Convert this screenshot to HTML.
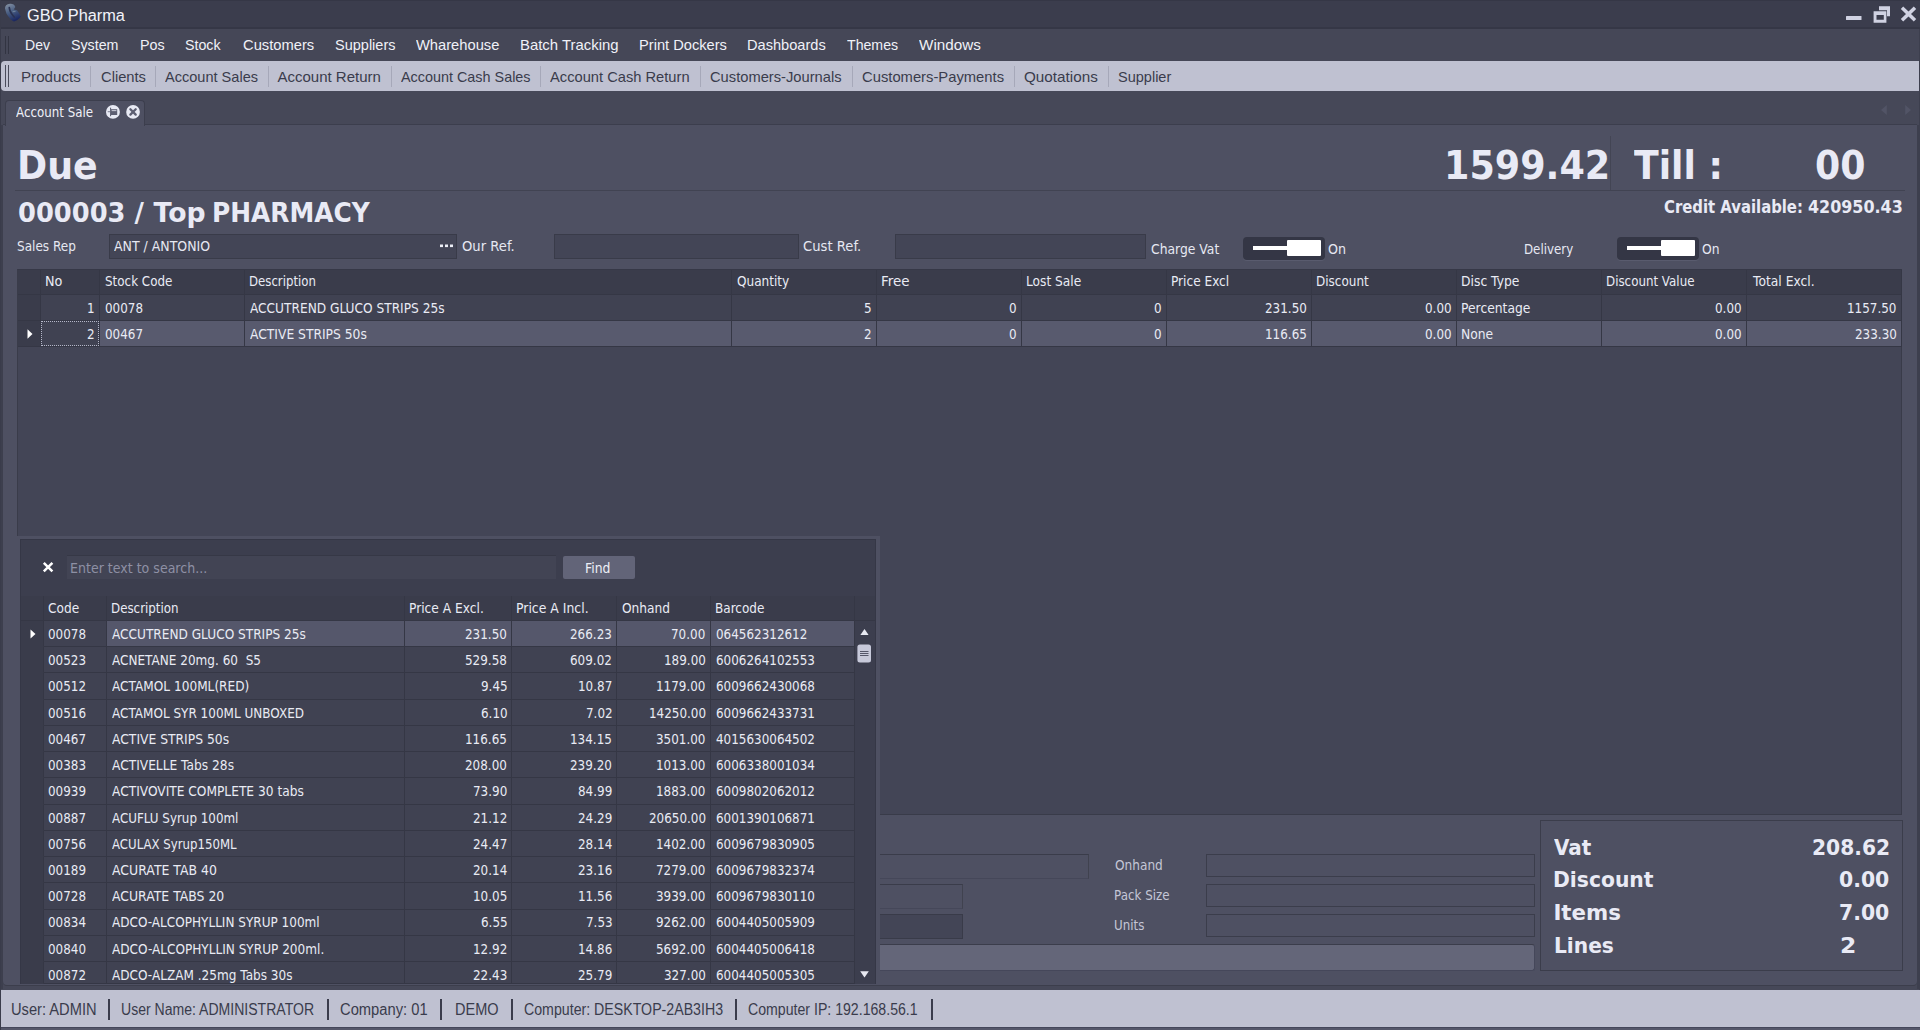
<!DOCTYPE html>
<html><head><meta charset="utf-8"><title>GBO Pharma</title>
<style>
*{box-sizing:border-box;margin:0;padding:0}
html,body{width:1920px;height:1030px;overflow:hidden;background:#464858;font-family:"DejaVu Sans",sans-serif;color:#eceef6}
div,span,i,b,u{position:absolute;white-space:pre;line-height:1}
span{transform-origin:0 0}
.s{font-family:"Liberation Sans",sans-serif}
.d{font-family:"DejaVu Sans",sans-serif}
.b{font-weight:bold;color:#e9eaf5}
#title{left:0;top:0;width:1920px;height:28px;background:#3b3d4d;border-top:1px solid #353746}
#titleline{left:0;top:27px;width:1920px;height:2px;background:#353746}
#menu{left:0;top:29px;width:1920px;height:32px;background:#454757}
#tool{left:1px;top:61px;width:1918px;height:30px;background:#bfc1d1;border-radius:4px 0 0 4px}
#tool i{top:5px;width:1px;height:21px;background:#a6a8b9}
.grip{width:4px;border-left:1px solid;border-right:1px solid}
#tab{left:5px;top:100px;width:140px;height:26px;background:#4e5062;border:1px solid #3c3e4d;border-bottom:none;border-radius:4px 4px 0 0}
#main{left:3px;top:124px;width:1914px;height:861px;background:#4e5062;border-top:1px solid #3c3e4d;border-radius:0 0 4px 4px;box-shadow:0 1px 0 #3c3e4c}
.inp{background:#434556;border:1px solid #393b49;height:25px}
.inp2{background:#4e5062;border:1px solid #3a3c4a;border-right-color:#40424f;border-bottom-color:#454759;height:25px}
.inp3{background:#4e5062;border:1px solid #3b3d4b;height:23px}
.hline{height:1px;background:#414352}
.c{height:26px;border-right:1px solid #353745;border-bottom:1px solid #353745}
.sel{background:#585a6e}
.sel2{background:#55576b}
.row{background:#404252}
.hd{background:#3a3c4b}
#status{left:1px;top:990px;width:1919px;height:37px;background:#bfc1d1}
#status i{top:9px;width:2px;height:21px;background:#3a3c4c}
#sb{left:0;top:1027px;width:1920px;height:3px;background:#55576a;border-top:1px solid #45475b}
.tog{width:82px;height:23px;background:#343645;border-radius:4px;box-shadow:0 1px 0 #595b6e}
.tog b{left:10px;top:9px;width:36px;height:4px;background:#fff}
.tog u{left:44px;top:3px;width:34px;height:16px;background:#fff;border-radius:1px}
</style></head><body>
<div id="title"></div><div id="titleline"></div>
<svg style="position:absolute;left:0;top:0" width="26" height="26" viewBox="0 0 26 26"><defs><linearGradient id="lg" x1="0.2" y1="0" x2="0.6" y2="1"><stop offset="0" stop-color="#808da0"/><stop offset="0.45" stop-color="#485d82"/><stop offset="1" stop-color="#17235f"/></linearGradient></defs><path d="M5 8.6 Q4.8 4.6 10 3.8 Q14.2 3.6 15.3 7 L13.8 9.4 L17 10.2 Q19.5 13 20.9 16.8 Q17.8 20.4 14 21.6 Q10 19.5 6.4 13.4 Z" fill="url(#lg)"/><path d="M9.3 7.7 Q9.6 11 11.4 13.4 L14.2 17" stroke="#2a3252" stroke-width="1.7" fill="none" stroke-linecap="round"/><path d="M12.6 11.6 L15.5 11.3" stroke="#6b7f99" stroke-width="1.2" fill="none"/></svg>
<span class="s" style="font-size:17.4px;color:#f2f3fa;left:26.8px;top:6.9px;transform:scaleX(0.938);">GBO Pharma</span>
<svg style="position:absolute;left:1840px;top:0" width="80" height="28" viewBox="0 0 80 28"><g fill="#d0d2e2"><rect x="6" y="16" width="15.5" height="4" rx="0.5"/><path d="M39 6.3 H50 V16.2 H47 V10.3 H39 Z"/><path d="M33.6 11.2 H46.4 V22.7 H33.6 Z M36.5 15.1 V19.8 H43.8 V15.1 Z" fill-rule="evenodd"/><path d="M63.2 6.5 L68.5 11.5 L73.8 6.5 L76.2 9 L71 14 L76.2 19 L73.8 21.5 L68.5 16.5 L63.2 21.5 L60.8 19 L66 14 L60.8 9 Z"/></g></svg>
<div id="menu"><div class="grip" style="left:5px;top:7px;height:18px;border-color:#323442"></div></div>
<span class="s" style="font-size:15px;color:#f0f1f8;left:24.9px;top:36.5px;transform:scaleX(0.936);">Dev</span>
<span class="s" style="font-size:15px;color:#f0f1f8;left:71.3px;top:36.5px;transform:scaleX(0.949);">System</span>
<span class="s" style="font-size:15px;color:#f0f1f8;left:139.5px;top:36.5px;transform:scaleX(0.953);">Pos</span>
<span class="s" style="font-size:15px;color:#f0f1f8;left:185.0px;top:36.5px;transform:scaleX(0.947);">Stock</span>
<span class="s" style="font-size:15px;color:#f0f1f8;left:243.0px;top:36.5px;transform:scaleX(0.982);">Customers</span>
<span class="s" style="font-size:15px;color:#f0f1f8;left:335.0px;top:36.5px;transform:scaleX(0.967);">Suppliers</span>
<span class="s" style="font-size:15px;color:#f0f1f8;left:416.0px;top:36.5px;transform:scaleX(0.980);">Wharehouse</span>
<span class="s" style="font-size:15px;color:#f0f1f8;left:520.0px;top:36.5px;transform:scaleX(0.993);">Batch Tracking</span>
<span class="s" style="font-size:15px;color:#f0f1f8;left:639.0px;top:36.5px;transform:scaleX(0.977);">Print Dockers</span>
<span class="s" style="font-size:15px;color:#f0f1f8;left:746.7px;top:36.5px;transform:scaleX(0.974);">Dashboards</span>
<span class="s" style="font-size:15px;color:#f0f1f8;left:846.7px;top:36.5px;transform:scaleX(0.943);">Themes</span>
<span class="s" style="font-size:15px;color:#f0f1f8;left:918.7px;top:36.5px;transform:scaleX(1.016);">Windows</span>
<div id="tool"><div class="grip" style="left:4px;top:4px;height:22px;border-color:#4a4c5c"></div>
<i style="left:89px"></i>
<i style="left:154px"></i>
<i style="left:267px"></i>
<i style="left:390px"></i>
<i style="left:539px"></i>
<i style="left:699px"></i>
<i style="left:851px"></i>
<i style="left:1013px"></i>
<i style="left:1107px"></i>
</div>
<span class="s" style="font-size:15px;color:#3a3c4c;left:20.7px;top:69.0px;transform:scaleX(1.010);">Products</span>
<span class="s" style="font-size:15px;color:#3a3c4c;left:100.5px;top:69.0px;transform:scaleX(0.981);">Clients</span>
<span class="s" style="font-size:15px;color:#3a3c4c;left:165.0px;top:69.0px;transform:scaleX(0.970);">Account Sales</span>
<span class="s" style="font-size:15px;color:#3a3c4c;left:277.5px;top:69.0px;">Account Return</span>
<span class="s" style="font-size:15px;color:#3a3c4c;left:401.0px;top:69.0px;transform:scaleX(0.959);">Account Cash Sales</span>
<span class="s" style="font-size:15px;color:#3a3c4c;left:550.0px;top:69.0px;transform:scaleX(0.979);">Account Cash Return</span>
<span class="s" style="font-size:15px;color:#3a3c4c;left:710.0px;top:69.0px;transform:scaleX(0.980);">Customers-Journals</span>
<span class="s" style="font-size:15px;color:#3a3c4c;left:861.7px;top:69.0px;transform:scaleX(0.985);">Customers-Payments</span>
<span class="s" style="font-size:15px;color:#3a3c4c;left:1024.0px;top:69.0px;transform:scaleX(1.017);">Quotations</span>
<span class="s" style="font-size:15px;color:#3a3c4c;left:1117.7px;top:69.0px;transform:scaleX(0.968);">Supplier</span>
<div style="left:0;top:125px;width:3px;height:864px;background:#3d3f4e"></div><div style="left:1917px;top:125px;width:3px;height:864px;background:#3d3f4e"></div><div id="main"></div><div id="tab"></div>
<span class="d" style="font-size:13.5px;color:#f0f1f8;left:16.2px;top:106.0px;transform:scaleX(0.878);">Account Sale</span>
<svg style="position:absolute;left:104px;top:104px" width="40" height="16" viewBox="0 0 40 16"><circle cx="8.95" cy="7.9" r="6.95" fill="#e8eaf4"/><rect x="7" y="5.2" width="6.2" height="5.8" fill="#5d5f72"/><rect x="7.6" y="6.3" width="4.8" height="0.8" fill="#e8eaf4"/><rect x="6.1" y="3.7" width="1" height="8.5" fill="#55576a"/><rect x="3.7" y="7.3" width="2.5" height="0.9" fill="#6b6d80"/><circle cx="29.05" cy="7.9" r="6.85" fill="#e8eaf4"/><path d="M26.4 5.3 L31.7 10.6 M31.7 5.3 L26.4 10.6" stroke="#5d5f72" stroke-width="2.3" stroke-linecap="round"/></svg>
<svg style="position:absolute;left:1878px;top:104px" width="36" height="12" viewBox="0 0 36 12"><path d="M8.8 1 L3 6 L8.8 11 Z M27.2 1 L33 6 L27.2 11 Z" fill="#525466"/></svg>
<span class="d b" style="font-size:39.5px;left:17.2px;top:145.6px;transform:scaleX(0.920);">Due</span>
<span class="d b" style="font-size:39.5px;left:1443.6px;top:145.6px;transform:scaleX(0.924);">1599.42</span>
<span class="d b" style="font-size:39.5px;left:1634.0px;top:145.6px;transform:scaleX(0.916);">Till :</span>
<span class="d b" style="font-size:39.5px;left:1814.9px;top:145.6px;transform:scaleX(0.918);">00</span>
<div style="left:1610px;top:136px;width:1px;height:54px;background:#434554"></div>
<div class="hline" style="left:15px;top:190px;width:1890px"></div>
<span class="d b" style="font-size:26.67px;left:17.6px;top:200.0px;transform:scaleX(0.966);">000003 /</span>
<span class="d b" style="font-size:26.67px;left:153.5px;top:200.0px;">Top</span>
<span class="d b" style="font-size:26.67px;left:211.9px;top:200.0px;transform:scaleX(0.933);">PHARMACY</span>
<span class="d b" style="font-size:17.33px;left:1664.3px;top:198.5px;transform:scaleX(0.857);">Credit Available:</span>
<span class="d b" style="font-size:17.33px;left:1808.0px;top:198.5px;transform:scaleX(0.920);">420950.43</span>
<span class="d" style="font-size:13.5px;color:#e6e8f2;left:17.0px;top:240.0px;transform:scaleX(0.894);">Sales Rep</span>
<div class="inp" style="left:109px;top:234px;width:348px"></div>
<span class="d" style="font-size:13.5px;color:#e6e8f2;left:113.5px;top:240.0px;transform:scaleX(0.927);">ANT / ANTONIO</span>
<svg style="position:absolute;left:440px;top:244px" width="14" height="4"><rect x="0" y="0.5" width="3" height="2.6" fill="#eceef6"/><rect x="5" y="0.5" width="3" height="2.6" fill="#eceef6"/><rect x="10" y="0.5" width="3" height="2.6" fill="#eceef6"/></svg>
<span class="d" style="font-size:13.5px;color:#e6e8f2;left:462.0px;top:240.0px;transform:scaleX(0.974);">Our Ref.</span>
<div class="inp" style="left:554px;top:234px;width:245px"></div>
<span class="d" style="font-size:13.5px;color:#e6e8f2;left:803.0px;top:240.0px;transform:scaleX(0.975);">Cust Ref.</span>
<div class="inp" style="left:895px;top:234px;width:251px"></div>
<span class="d" style="font-size:13.5px;color:#e6e8f2;left:1151.0px;top:242.7px;transform:scaleX(0.917);">Charge Vat</span>
<div class="tog" style="left:1243px;top:237px"><b></b><u></u></div>
<span class="d" style="font-size:13.5px;color:#e6e8f2;left:1328.0px;top:242.7px;transform:scaleX(0.940);">On</span>
<span class="d" style="font-size:13.5px;color:#e6e8f2;left:1523.8px;top:242.7px;transform:scaleX(0.877);">Delivery</span>
<div class="tog" style="left:1617px;top:237px"><b></b><u></u></div>
<span class="d" style="font-size:13.5px;color:#e6e8f2;left:1702.0px;top:242.7px;transform:scaleX(0.913);">On</span>
<div style="left:17px;top:269px;width:1885px;height:546px;background:#434556;border:1px solid #393b49;border-top-color:#363847;border-left-color:#3a3c4a"></div>
<div class="c hd" style="left:18px;top:270px;width:23px;height:25px"></div>
<div class="c hd" style="left:41px;top:270px;width:59px;height:25px"></div>
<div class="c hd" style="left:100px;top:270px;width:145px;height:25px"></div>
<div class="c hd" style="left:245px;top:270px;width:487px;height:25px"></div>
<div class="c hd" style="left:732px;top:270px;width:145px;height:25px"></div>
<div class="c hd" style="left:877px;top:270px;width:145px;height:25px"></div>
<div class="c hd" style="left:1022px;top:270px;width:145px;height:25px"></div>
<div class="c hd" style="left:1167px;top:270px;width:145px;height:25px"></div>
<div class="c hd" style="left:1312px;top:270px;width:145px;height:25px"></div>
<div class="c hd" style="left:1457px;top:270px;width:145px;height:25px"></div>
<div class="c hd" style="left:1602px;top:270px;width:145px;height:25px"></div>
<div class="c hd" style="left:1747px;top:270px;width:155px;height:25px"></div>
<div class="c hd" style="left:18px;top:295px;width:23px"></div>
<div class="c row" style="left:41px;top:295px;width:59px"></div>
<div class="c row" style="left:100px;top:295px;width:145px"></div>
<div class="c row" style="left:245px;top:295px;width:487px"></div>
<div class="c row" style="left:732px;top:295px;width:145px"></div>
<div class="c row" style="left:877px;top:295px;width:145px"></div>
<div class="c row" style="left:1022px;top:295px;width:145px"></div>
<div class="c row" style="left:1167px;top:295px;width:145px"></div>
<div class="c row" style="left:1312px;top:295px;width:145px"></div>
<div class="c row" style="left:1457px;top:295px;width:145px"></div>
<div class="c row" style="left:1602px;top:295px;width:145px"></div>
<div class="c row" style="left:1747px;top:295px;width:155px"></div>
<div class="c hd" style="left:18px;top:321px;width:23px"></div>
<div class="c row" style="left:41px;top:321px;width:59px"></div>
<div class="c sel" style="left:100px;top:321px;width:145px"></div>
<div class="c sel" style="left:245px;top:321px;width:487px"></div>
<div class="c sel" style="left:732px;top:321px;width:145px"></div>
<div class="c sel" style="left:877px;top:321px;width:145px"></div>
<div class="c sel" style="left:1022px;top:321px;width:145px"></div>
<div class="c sel" style="left:1167px;top:321px;width:145px"></div>
<div class="c sel" style="left:1312px;top:321px;width:145px"></div>
<div class="c sel" style="left:1457px;top:321px;width:145px"></div>
<div class="c sel" style="left:1602px;top:321px;width:145px"></div>
<div class="c sel" style="left:1747px;top:321px;width:155px"></div>
<svg style="position:absolute;left:27px;top:329px" width="6" height="11"><path d="M0.5 0.3 L5.5 5 L0.5 9.7 Z" fill="#fff"/></svg>
<div style="left:41px;top:321px;width:58px;height:25px;border:1px dotted #b4b6c8"></div>
<span class="d" style="font-size:13.5px;color:#e9ebf4;left:44.9px;top:275.2px;transform:scaleX(0.947);">No</span>
<span class="d" style="font-size:13.5px;color:#e9ebf4;left:104.8px;top:275.2px;transform:scaleX(0.885);">Stock Code</span>
<span class="d" style="font-size:13.5px;color:#e9ebf4;left:248.9px;top:275.2px;transform:scaleX(0.870);">Description</span>
<span class="d" style="font-size:13.5px;color:#e9ebf4;left:736.9px;top:275.2px;transform:scaleX(0.896);">Quantity</span>
<span class="d" style="font-size:13.5px;color:#e9ebf4;left:881.1px;top:275.2px;transform:scaleX(0.995);">Free</span>
<span class="d" style="font-size:13.5px;color:#e9ebf4;left:1026.1px;top:275.2px;transform:scaleX(0.904);">Lost Sale</span>
<span class="d" style="font-size:13.5px;color:#e9ebf4;left:1171.1px;top:275.2px;transform:scaleX(0.899);">Price Excl</span>
<span class="d" style="font-size:13.5px;color:#e9ebf4;left:1316.1px;top:275.2px;transform:scaleX(0.890);">Discount</span>
<span class="d" style="font-size:13.5px;color:#e9ebf4;left:1461.1px;top:275.2px;transform:scaleX(0.915);">Disc Type</span>
<span class="d" style="font-size:13.5px;color:#e9ebf4;left:1606.1px;top:275.2px;transform:scaleX(0.879);">Discount Value</span>
<span class="d" style="font-size:13.5px;color:#e9ebf4;left:1752.5px;top:275.2px;transform:scaleX(0.913);">Total Excl.</span>
<span class="d" style="font-size:13.5px;color:#e9ebf4;left:87.3px;top:301.7px;transform:scaleX(0.886);">1</span>
<span class="d" style="font-size:13.5px;color:#e9ebf4;left:104.8px;top:301.7px;transform:scaleX(0.886);">00078</span>
<span class="d" style="font-size:13.5px;color:#e9ebf4;left:250.2px;top:301.7px;transform:scaleX(0.902);">ACCUTREND GLUCO STRIPS 25s</span>
<span class="d" style="font-size:13.5px;color:#e9ebf4;left:864.3px;top:301.7px;transform:scaleX(0.886);">5</span>
<span class="d" style="font-size:13.5px;color:#e9ebf4;left:1009.3px;top:301.7px;transform:scaleX(0.886);">0</span>
<span class="d" style="font-size:13.5px;color:#e9ebf4;left:1154.3px;top:301.7px;transform:scaleX(0.886);">0</span>
<span class="d" style="font-size:13.5px;color:#e9ebf4;left:1265.0px;top:301.7px;transform:scaleX(0.886);">231.50</span>
<span class="d" style="font-size:13.5px;color:#e9ebf4;left:1425.3px;top:301.7px;transform:scaleX(0.886);">0.00</span>
<span class="d" style="font-size:13.5px;color:#e9ebf4;left:1461.1px;top:301.7px;transform:scaleX(0.914);">Percentage</span>
<span class="d" style="font-size:13.5px;color:#e9ebf4;left:1715.3px;top:301.7px;transform:scaleX(0.886);">0.00</span>
<span class="d" style="font-size:13.5px;color:#e9ebf4;left:1847.4px;top:301.7px;transform:scaleX(0.886);">1157.50</span>
<span class="d" style="font-size:13.5px;color:#e9ebf4;left:87.3px;top:327.5px;transform:scaleX(0.886);">2</span>
<span class="d" style="font-size:13.5px;color:#e9ebf4;left:104.8px;top:327.5px;transform:scaleX(0.886);">00467</span>
<span class="d" style="font-size:13.5px;color:#e9ebf4;left:250.2px;top:327.5px;transform:scaleX(0.912);">ACTIVE STRIPS 50s</span>
<span class="d" style="font-size:13.5px;color:#e9ebf4;left:864.3px;top:327.5px;transform:scaleX(0.886);">2</span>
<span class="d" style="font-size:13.5px;color:#e9ebf4;left:1009.3px;top:327.5px;transform:scaleX(0.886);">0</span>
<span class="d" style="font-size:13.5px;color:#e9ebf4;left:1154.3px;top:327.5px;transform:scaleX(0.886);">0</span>
<span class="d" style="font-size:13.5px;color:#e9ebf4;left:1265.0px;top:327.5px;transform:scaleX(0.886);">116.65</span>
<span class="d" style="font-size:13.5px;color:#e9ebf4;left:1425.3px;top:327.5px;transform:scaleX(0.886);">0.00</span>
<span class="d" style="font-size:13.5px;color:#e9ebf4;left:1461.1px;top:327.5px;transform:scaleX(0.914);">None</span>
<span class="d" style="font-size:13.5px;color:#e9ebf4;left:1715.3px;top:327.5px;transform:scaleX(0.886);">0.00</span>
<span class="d" style="font-size:13.5px;color:#e9ebf4;left:1855.0px;top:327.5px;transform:scaleX(0.886);">233.30</span>
<div class="inp2" style="left:870px;top:854px;width:219px"></div>
<div class="inp2" style="left:870px;top:884px;width:93px"></div>
<div class="inp" style="left:870px;top:914px;width:93px"></div>
<div class="inp3" style="left:1206px;top:854px;width:329px"></div>
<div class="inp3" style="left:1206px;top:884px;width:329px"></div>
<div class="inp3" style="left:1206px;top:914px;width:329px"></div>
<div style="left:870px;top:944px;width:665px;height:27px;background:#646679;border:1px solid #45475a;border-top-color:#3b3d4b;border-radius:3px"></div>
<span class="d" style="font-size:13.5px;color:#c4c6d6;left:1114.6px;top:858.8px;transform:scaleX(0.900);">Onhand</span>
<span class="d" style="font-size:13.5px;color:#c4c6d6;left:1113.7px;top:888.8px;transform:scaleX(0.881);">Pack Size</span>
<span class="d" style="font-size:13.5px;color:#c4c6d6;left:1113.7px;top:918.8px;transform:scaleX(0.878);">Units</span>
<div style="left:1540px;top:820px;width:363px;height:151px;border:1px solid #3b3d4b"></div>
<span class="d b" style="font-size:21.33px;left:1554.4px;top:836.6px;transform:scaleX(0.934);">Vat</span>
<span class="d b" style="font-size:21.33px;left:1812.4px;top:836.6px;transform:scaleX(0.950);">208.62</span>
<span class="d b" style="font-size:21.33px;left:1553.4px;top:869.0px;transform:scaleX(0.952);">Discount</span>
<span class="d b" style="font-size:21.33px;left:1839.2px;top:869.0px;transform:scaleX(0.956);">0.00</span>
<span class="d b" style="font-size:21.33px;left:1553.4px;top:901.8px;">Items</span>
<span class="d b" style="font-size:21.33px;left:1839.2px;top:901.8px;transform:scaleX(0.956);">7.00</span>
<span class="d b" style="font-size:21.33px;left:1553.5px;top:934.5px;transform:scaleX(0.947);">Lines</span>
<span class="d b" style="font-size:21.33px;left:1839.7px;top:934.5px;transform:scaleX(1.100);">2</span>
<div style="left:17px;top:536px;width:863px;height:449px;background:#4e5062"></div>
<div style="left:20px;top:539px;width:856px;height:445px;background:#3c3e4e;border:1px solid #353746;border-bottom:none"></div>
<svg style="position:absolute;left:42px;top:561px" width="12" height="12"><path d="M1.8 1.8 L10.4 10.4 M10.4 1.8 L1.8 10.4" stroke="#fff" stroke-width="2.5"/></svg>
<div style="left:67px;top:555px;width:489px;height:24px;background:#424454;border-top:1px solid #363846"></div>
<span class="d" style="font-size:13.5px;color:#8e90a4;left:69.9px;top:561.6px;transform:scaleX(0.933);">Enter text to search...</span>
<div style="left:563px;top:556px;width:72px;height:23px;background:#626478;border-radius:2px"></div>
<span class="d" style="font-size:13.5px;color:#eceef6;left:585.1px;top:561.5px;transform:scaleX(0.920);">Find</span>
<div class="c hd" style="left:21px;top:596px;width:23px;height:25px"></div>
<div class="c hd" style="left:44px;top:596px;width:63px;height:25px"></div>
<span class="d" style="font-size:13.5px;color:#e9ebf4;left:48.4px;top:601.8px;transform:scaleX(0.902);">Code</span>
<div class="c hd" style="left:107px;top:596px;width:298px;height:25px"></div>
<span class="d" style="font-size:13.5px;color:#e9ebf4;left:111.0px;top:601.8px;transform:scaleX(0.879);">Description</span>
<div class="c hd" style="left:405px;top:596px;width:107px;height:25px"></div>
<span class="d" style="font-size:13.5px;color:#e9ebf4;left:408.7px;top:601.8px;transform:scaleX(0.908);">Price A Excl.</span>
<div class="c hd" style="left:512px;top:596px;width:105px;height:25px"></div>
<span class="d" style="font-size:13.5px;color:#e9ebf4;left:516.0px;top:601.8px;transform:scaleX(0.922);">Price A Incl.</span>
<div class="c hd" style="left:617px;top:596px;width:94px;height:25px"></div>
<span class="d" style="font-size:13.5px;color:#e9ebf4;left:621.9px;top:601.8px;transform:scaleX(0.904);">Onhand</span>
<div class="c hd" style="left:711px;top:596px;width:144px;height:25px"></div>
<span class="d" style="font-size:13.5px;color:#e9ebf4;left:715.0px;top:601.8px;transform:scaleX(0.892);">Barcode</span>
<div class="c hd" style="left:855px;top:596px;width:20px;height:25px;border-right:none"></div>
<div class="c hd" style="left:21px;top:621px;width:23px;height:26px;border-bottom-color:#3a3c4b"></div>
<div class="c row" style="left:44px;top:621px;width:63px;height:26px"></div>
<span class="d" style="font-size:13.5px;color:#e9ebf4;left:48.4px;top:627.9px;transform:scaleX(0.886);">00078</span>
<div class="c sel2" style="left:107px;top:621px;width:298px;height:26px"></div>
<span class="d" style="font-size:13.5px;color:#e9ebf4;left:112.3px;top:627.9px;transform:scaleX(0.899);">ACCUTREND GLUCO STRIPS 25s</span>
<div class="c sel2" style="left:405px;top:621px;width:107px;height:26px"></div>
<span class="d" style="font-size:13.5px;color:#e9ebf4;left:465.2px;top:627.9px;transform:scaleX(0.886);">231.50</span>
<div class="c sel2" style="left:512px;top:621px;width:105px;height:26px"></div>
<span class="d" style="font-size:13.5px;color:#e9ebf4;left:570.2px;top:627.9px;transform:scaleX(0.886);">266.23</span>
<div class="c sel2" style="left:617px;top:621px;width:94px;height:26px"></div>
<span class="d" style="font-size:13.5px;color:#e9ebf4;left:671.3px;top:627.9px;transform:scaleX(0.886);">70.00</span>
<div class="c sel2" style="left:711px;top:621px;width:144px;height:26px"></div>
<span class="d" style="font-size:13.5px;color:#e9ebf4;left:716.0px;top:627.9px;transform:scaleX(0.886);">064562312612</span>
<div class="c hd" style="left:21px;top:647px;width:23px;height:26px;border-bottom-color:#3a3c4b"></div>
<div class="c row" style="left:44px;top:647px;width:63px;height:26px"></div>
<span class="d" style="font-size:13.5px;color:#e9ebf4;left:48.4px;top:654.1px;transform:scaleX(0.886);">00523</span>
<div class="c row" style="left:107px;top:647px;width:298px;height:26px"></div>
<span class="d" style="font-size:13.5px;color:#e9ebf4;left:112.3px;top:654.1px;transform:scaleX(0.893);">ACNETANE 20mg. 60  S5</span>
<div class="c row" style="left:405px;top:647px;width:107px;height:26px"></div>
<span class="d" style="font-size:13.5px;color:#e9ebf4;left:465.2px;top:654.1px;transform:scaleX(0.886);">529.58</span>
<div class="c row" style="left:512px;top:647px;width:105px;height:26px"></div>
<span class="d" style="font-size:13.5px;color:#e9ebf4;left:570.2px;top:654.1px;transform:scaleX(0.886);">609.02</span>
<div class="c row" style="left:617px;top:647px;width:94px;height:26px"></div>
<span class="d" style="font-size:13.5px;color:#e9ebf4;left:663.7px;top:654.1px;transform:scaleX(0.886);">189.00</span>
<div class="c row" style="left:711px;top:647px;width:144px;height:26px"></div>
<span class="d" style="font-size:13.5px;color:#e9ebf4;left:716.0px;top:654.1px;transform:scaleX(0.886);">6006264102553</span>
<div class="c hd" style="left:21px;top:673px;width:23px;height:27px;border-bottom-color:#3a3c4b"></div>
<div class="c row" style="left:44px;top:673px;width:63px;height:27px"></div>
<span class="d" style="font-size:13.5px;color:#e9ebf4;left:48.4px;top:680.4px;transform:scaleX(0.886);">00512</span>
<div class="c row" style="left:107px;top:673px;width:298px;height:27px"></div>
<span class="d" style="font-size:13.5px;color:#e9ebf4;left:112.3px;top:680.4px;transform:scaleX(0.899);">ACTAMOL 100ML(RED)</span>
<div class="c row" style="left:405px;top:673px;width:107px;height:27px"></div>
<span class="d" style="font-size:13.5px;color:#e9ebf4;left:480.5px;top:680.4px;transform:scaleX(0.886);">9.45</span>
<div class="c row" style="left:512px;top:673px;width:105px;height:27px"></div>
<span class="d" style="font-size:13.5px;color:#e9ebf4;left:577.8px;top:680.4px;transform:scaleX(0.886);">10.87</span>
<div class="c row" style="left:617px;top:673px;width:94px;height:27px"></div>
<span class="d" style="font-size:13.5px;color:#e9ebf4;left:656.1px;top:680.4px;transform:scaleX(0.886);">1179.00</span>
<div class="c row" style="left:711px;top:673px;width:144px;height:27px"></div>
<span class="d" style="font-size:13.5px;color:#e9ebf4;left:716.0px;top:680.4px;transform:scaleX(0.886);">6009662430068</span>
<div class="c hd" style="left:21px;top:700px;width:23px;height:26px;border-bottom-color:#3a3c4b"></div>
<div class="c row" style="left:44px;top:700px;width:63px;height:26px"></div>
<span class="d" style="font-size:13.5px;color:#e9ebf4;left:48.4px;top:706.6px;transform:scaleX(0.886);">00516</span>
<div class="c row" style="left:107px;top:700px;width:298px;height:26px"></div>
<span class="d" style="font-size:13.5px;color:#e9ebf4;left:112.3px;top:706.6px;transform:scaleX(0.891);">ACTAMOL SYR 100ML UNBOXED</span>
<div class="c row" style="left:405px;top:700px;width:107px;height:26px"></div>
<span class="d" style="font-size:13.5px;color:#e9ebf4;left:480.5px;top:706.6px;transform:scaleX(0.886);">6.10</span>
<div class="c row" style="left:512px;top:700px;width:105px;height:26px"></div>
<span class="d" style="font-size:13.5px;color:#e9ebf4;left:585.5px;top:706.6px;transform:scaleX(0.886);">7.02</span>
<div class="c row" style="left:617px;top:700px;width:94px;height:26px"></div>
<span class="d" style="font-size:13.5px;color:#e9ebf4;left:648.5px;top:706.6px;transform:scaleX(0.886);">14250.00</span>
<div class="c row" style="left:711px;top:700px;width:144px;height:26px"></div>
<span class="d" style="font-size:13.5px;color:#e9ebf4;left:716.0px;top:706.6px;transform:scaleX(0.886);">6009662433731</span>
<div class="c hd" style="left:21px;top:726px;width:23px;height:26px;border-bottom-color:#3a3c4b"></div>
<div class="c row" style="left:44px;top:726px;width:63px;height:26px"></div>
<span class="d" style="font-size:13.5px;color:#e9ebf4;left:48.4px;top:732.8px;transform:scaleX(0.886);">00467</span>
<div class="c row" style="left:107px;top:726px;width:298px;height:26px"></div>
<span class="d" style="font-size:13.5px;color:#e9ebf4;left:112.3px;top:732.8px;transform:scaleX(0.914);">ACTIVE STRIPS 50s</span>
<div class="c row" style="left:405px;top:726px;width:107px;height:26px"></div>
<span class="d" style="font-size:13.5px;color:#e9ebf4;left:465.2px;top:732.8px;transform:scaleX(0.886);">116.65</span>
<div class="c row" style="left:512px;top:726px;width:105px;height:26px"></div>
<span class="d" style="font-size:13.5px;color:#e9ebf4;left:570.2px;top:732.8px;transform:scaleX(0.886);">134.15</span>
<div class="c row" style="left:617px;top:726px;width:94px;height:26px"></div>
<span class="d" style="font-size:13.5px;color:#e9ebf4;left:656.1px;top:732.8px;transform:scaleX(0.886);">3501.00</span>
<div class="c row" style="left:711px;top:726px;width:144px;height:26px"></div>
<span class="d" style="font-size:13.5px;color:#e9ebf4;left:716.0px;top:732.8px;transform:scaleX(0.886);">4015630064502</span>
<div class="c hd" style="left:21px;top:752px;width:23px;height:26px;border-bottom-color:#3a3c4b"></div>
<div class="c row" style="left:44px;top:752px;width:63px;height:26px"></div>
<span class="d" style="font-size:13.5px;color:#e9ebf4;left:48.4px;top:759.0px;transform:scaleX(0.886);">00383</span>
<div class="c row" style="left:107px;top:752px;width:298px;height:26px"></div>
<span class="d" style="font-size:13.5px;color:#e9ebf4;left:112.3px;top:759.0px;transform:scaleX(0.906);">ACTIVELLE Tabs 28s</span>
<div class="c row" style="left:405px;top:752px;width:107px;height:26px"></div>
<span class="d" style="font-size:13.5px;color:#e9ebf4;left:465.2px;top:759.0px;transform:scaleX(0.886);">208.00</span>
<div class="c row" style="left:512px;top:752px;width:105px;height:26px"></div>
<span class="d" style="font-size:13.5px;color:#e9ebf4;left:570.2px;top:759.0px;transform:scaleX(0.886);">239.20</span>
<div class="c row" style="left:617px;top:752px;width:94px;height:26px"></div>
<span class="d" style="font-size:13.5px;color:#e9ebf4;left:656.1px;top:759.0px;transform:scaleX(0.886);">1013.00</span>
<div class="c row" style="left:711px;top:752px;width:144px;height:26px"></div>
<span class="d" style="font-size:13.5px;color:#e9ebf4;left:716.0px;top:759.0px;transform:scaleX(0.886);">6006338001034</span>
<div class="c hd" style="left:21px;top:778px;width:23px;height:27px;border-bottom-color:#3a3c4b"></div>
<div class="c row" style="left:44px;top:778px;width:63px;height:27px"></div>
<span class="d" style="font-size:13.5px;color:#e9ebf4;left:48.4px;top:785.3px;transform:scaleX(0.886);">00939</span>
<div class="c row" style="left:107px;top:778px;width:298px;height:27px"></div>
<span class="d" style="font-size:13.5px;color:#e9ebf4;left:112.3px;top:785.3px;transform:scaleX(0.905);">ACTIVOVITE COMPLETE 30 tabs</span>
<div class="c row" style="left:405px;top:778px;width:107px;height:27px"></div>
<span class="d" style="font-size:13.5px;color:#e9ebf4;left:472.8px;top:785.3px;transform:scaleX(0.886);">73.90</span>
<div class="c row" style="left:512px;top:778px;width:105px;height:27px"></div>
<span class="d" style="font-size:13.5px;color:#e9ebf4;left:577.8px;top:785.3px;transform:scaleX(0.886);">84.99</span>
<div class="c row" style="left:617px;top:778px;width:94px;height:27px"></div>
<span class="d" style="font-size:13.5px;color:#e9ebf4;left:656.1px;top:785.3px;transform:scaleX(0.886);">1883.00</span>
<div class="c row" style="left:711px;top:778px;width:144px;height:27px"></div>
<span class="d" style="font-size:13.5px;color:#e9ebf4;left:716.0px;top:785.3px;transform:scaleX(0.886);">6009802062012</span>
<div class="c hd" style="left:21px;top:805px;width:23px;height:26px;border-bottom-color:#3a3c4b"></div>
<div class="c row" style="left:44px;top:805px;width:63px;height:26px"></div>
<span class="d" style="font-size:13.5px;color:#e9ebf4;left:48.4px;top:811.5px;transform:scaleX(0.886);">00887</span>
<div class="c row" style="left:107px;top:805px;width:298px;height:26px"></div>
<span class="d" style="font-size:13.5px;color:#e9ebf4;left:112.3px;top:811.5px;transform:scaleX(0.882);">ACUFLU Syrup 100ml</span>
<div class="c row" style="left:405px;top:805px;width:107px;height:26px"></div>
<span class="d" style="font-size:13.5px;color:#e9ebf4;left:472.8px;top:811.5px;transform:scaleX(0.886);">21.12</span>
<div class="c row" style="left:512px;top:805px;width:105px;height:26px"></div>
<span class="d" style="font-size:13.5px;color:#e9ebf4;left:577.8px;top:811.5px;transform:scaleX(0.886);">24.29</span>
<div class="c row" style="left:617px;top:805px;width:94px;height:26px"></div>
<span class="d" style="font-size:13.5px;color:#e9ebf4;left:648.5px;top:811.5px;transform:scaleX(0.886);">20650.00</span>
<div class="c row" style="left:711px;top:805px;width:144px;height:26px"></div>
<span class="d" style="font-size:13.5px;color:#e9ebf4;left:716.0px;top:811.5px;transform:scaleX(0.886);">6001390106871</span>
<div class="c hd" style="left:21px;top:831px;width:23px;height:26px;border-bottom-color:#3a3c4b"></div>
<div class="c row" style="left:44px;top:831px;width:63px;height:26px"></div>
<span class="d" style="font-size:13.5px;color:#e9ebf4;left:48.4px;top:837.7px;transform:scaleX(0.886);">00756</span>
<div class="c row" style="left:107px;top:831px;width:298px;height:26px"></div>
<span class="d" style="font-size:13.5px;color:#e9ebf4;left:112.3px;top:837.7px;transform:scaleX(0.871);">ACULAX Syrup150ML</span>
<div class="c row" style="left:405px;top:831px;width:107px;height:26px"></div>
<span class="d" style="font-size:13.5px;color:#e9ebf4;left:472.8px;top:837.7px;transform:scaleX(0.886);">24.47</span>
<div class="c row" style="left:512px;top:831px;width:105px;height:26px"></div>
<span class="d" style="font-size:13.5px;color:#e9ebf4;left:577.8px;top:837.7px;transform:scaleX(0.886);">28.14</span>
<div class="c row" style="left:617px;top:831px;width:94px;height:26px"></div>
<span class="d" style="font-size:13.5px;color:#e9ebf4;left:656.1px;top:837.7px;transform:scaleX(0.886);">1402.00</span>
<div class="c row" style="left:711px;top:831px;width:144px;height:26px"></div>
<span class="d" style="font-size:13.5px;color:#e9ebf4;left:716.0px;top:837.7px;transform:scaleX(0.886);">6009679830905</span>
<div class="c hd" style="left:21px;top:857px;width:23px;height:26px;border-bottom-color:#3a3c4b"></div>
<div class="c row" style="left:44px;top:857px;width:63px;height:26px"></div>
<span class="d" style="font-size:13.5px;color:#e9ebf4;left:48.4px;top:864.0px;transform:scaleX(0.886);">00189</span>
<div class="c row" style="left:107px;top:857px;width:298px;height:26px"></div>
<span class="d" style="font-size:13.5px;color:#e9ebf4;left:112.3px;top:864.0px;transform:scaleX(0.924);">ACURATE TAB 40</span>
<div class="c row" style="left:405px;top:857px;width:107px;height:26px"></div>
<span class="d" style="font-size:13.5px;color:#e9ebf4;left:472.8px;top:864.0px;transform:scaleX(0.886);">20.14</span>
<div class="c row" style="left:512px;top:857px;width:105px;height:26px"></div>
<span class="d" style="font-size:13.5px;color:#e9ebf4;left:577.8px;top:864.0px;transform:scaleX(0.886);">23.16</span>
<div class="c row" style="left:617px;top:857px;width:94px;height:26px"></div>
<span class="d" style="font-size:13.5px;color:#e9ebf4;left:656.1px;top:864.0px;transform:scaleX(0.886);">7279.00</span>
<div class="c row" style="left:711px;top:857px;width:144px;height:26px"></div>
<span class="d" style="font-size:13.5px;color:#e9ebf4;left:716.0px;top:864.0px;transform:scaleX(0.886);">6009679832374</span>
<div class="c hd" style="left:21px;top:883px;width:23px;height:27px;border-bottom-color:#3a3c4b"></div>
<div class="c row" style="left:44px;top:883px;width:63px;height:27px"></div>
<span class="d" style="font-size:13.5px;color:#e9ebf4;left:48.4px;top:890.2px;transform:scaleX(0.886);">00728</span>
<div class="c row" style="left:107px;top:883px;width:298px;height:27px"></div>
<span class="d" style="font-size:13.5px;color:#e9ebf4;left:112.3px;top:890.2px;transform:scaleX(0.921);">ACURATE TABS 20</span>
<div class="c row" style="left:405px;top:883px;width:107px;height:27px"></div>
<span class="d" style="font-size:13.5px;color:#e9ebf4;left:472.8px;top:890.2px;transform:scaleX(0.886);">10.05</span>
<div class="c row" style="left:512px;top:883px;width:105px;height:27px"></div>
<span class="d" style="font-size:13.5px;color:#e9ebf4;left:577.8px;top:890.2px;transform:scaleX(0.886);">11.56</span>
<div class="c row" style="left:617px;top:883px;width:94px;height:27px"></div>
<span class="d" style="font-size:13.5px;color:#e9ebf4;left:656.1px;top:890.2px;transform:scaleX(0.886);">3939.00</span>
<div class="c row" style="left:711px;top:883px;width:144px;height:27px"></div>
<span class="d" style="font-size:13.5px;color:#e9ebf4;left:716.0px;top:890.2px;transform:scaleX(0.886);">6009679830110</span>
<div class="c hd" style="left:21px;top:910px;width:23px;height:26px;border-bottom-color:#3a3c4b"></div>
<div class="c row" style="left:44px;top:910px;width:63px;height:26px"></div>
<span class="d" style="font-size:13.5px;color:#e9ebf4;left:48.4px;top:916.4px;transform:scaleX(0.886);">00834</span>
<div class="c row" style="left:107px;top:910px;width:298px;height:26px"></div>
<span class="d" style="font-size:13.5px;color:#e9ebf4;left:112.3px;top:916.4px;transform:scaleX(0.893);">ADCO-ALCOPHYLLIN SYRUP 100ml</span>
<div class="c row" style="left:405px;top:910px;width:107px;height:26px"></div>
<span class="d" style="font-size:13.5px;color:#e9ebf4;left:480.5px;top:916.4px;transform:scaleX(0.886);">6.55</span>
<div class="c row" style="left:512px;top:910px;width:105px;height:26px"></div>
<span class="d" style="font-size:13.5px;color:#e9ebf4;left:585.5px;top:916.4px;transform:scaleX(0.886);">7.53</span>
<div class="c row" style="left:617px;top:910px;width:94px;height:26px"></div>
<span class="d" style="font-size:13.5px;color:#e9ebf4;left:656.1px;top:916.4px;transform:scaleX(0.886);">9262.00</span>
<div class="c row" style="left:711px;top:910px;width:144px;height:26px"></div>
<span class="d" style="font-size:13.5px;color:#e9ebf4;left:716.0px;top:916.4px;transform:scaleX(0.886);">6004405005909</span>
<div class="c hd" style="left:21px;top:936px;width:23px;height:26px;border-bottom-color:#3a3c4b"></div>
<div class="c row" style="left:44px;top:936px;width:63px;height:26px"></div>
<span class="d" style="font-size:13.5px;color:#e9ebf4;left:48.4px;top:942.7px;transform:scaleX(0.886);">00840</span>
<div class="c row" style="left:107px;top:936px;width:298px;height:26px"></div>
<span class="d" style="font-size:13.5px;color:#e9ebf4;left:112.3px;top:942.7px;transform:scaleX(0.896);">ADCO-ALCOPHYLLIN SYRUP 200ml.</span>
<div class="c row" style="left:405px;top:936px;width:107px;height:26px"></div>
<span class="d" style="font-size:13.5px;color:#e9ebf4;left:472.8px;top:942.7px;transform:scaleX(0.886);">12.92</span>
<div class="c row" style="left:512px;top:936px;width:105px;height:26px"></div>
<span class="d" style="font-size:13.5px;color:#e9ebf4;left:577.8px;top:942.7px;transform:scaleX(0.886);">14.86</span>
<div class="c row" style="left:617px;top:936px;width:94px;height:26px"></div>
<span class="d" style="font-size:13.5px;color:#e9ebf4;left:656.1px;top:942.7px;transform:scaleX(0.886);">5692.00</span>
<div class="c row" style="left:711px;top:936px;width:144px;height:26px"></div>
<span class="d" style="font-size:13.5px;color:#e9ebf4;left:716.0px;top:942.7px;transform:scaleX(0.886);">6004405006418</span>
<div class="c hd" style="left:21px;top:962px;width:23px;height:22px;border-bottom-color:#3a3c4b"></div>
<div class="c row" style="left:44px;top:962px;width:63px;height:22px"></div>
<span class="d" style="font-size:13.5px;color:#e9ebf4;left:48.4px;top:968.9px;transform:scaleX(0.886);">00872</span>
<div class="c row" style="left:107px;top:962px;width:298px;height:22px"></div>
<span class="d" style="font-size:13.5px;color:#e9ebf4;left:112.3px;top:968.9px;transform:scaleX(0.895);">ADCO-ALZAM .25mg Tabs 30s</span>
<div class="c row" style="left:405px;top:962px;width:107px;height:22px"></div>
<span class="d" style="font-size:13.5px;color:#e9ebf4;left:472.8px;top:968.9px;transform:scaleX(0.886);">22.43</span>
<div class="c row" style="left:512px;top:962px;width:105px;height:22px"></div>
<span class="d" style="font-size:13.5px;color:#e9ebf4;left:577.8px;top:968.9px;transform:scaleX(0.886);">25.79</span>
<div class="c row" style="left:617px;top:962px;width:94px;height:22px"></div>
<span class="d" style="font-size:13.5px;color:#e9ebf4;left:663.7px;top:968.9px;transform:scaleX(0.886);">327.00</span>
<div class="c row" style="left:711px;top:962px;width:144px;height:22px"></div>
<span class="d" style="font-size:13.5px;color:#e9ebf4;left:716.0px;top:968.9px;transform:scaleX(0.886);">6004405005305</span>
<svg style="position:absolute;left:30px;top:629px" width="6" height="11"><path d="M0.5 0.5 L5.5 5 L0.5 9.5 Z" fill="#fff"/></svg>
<div style="left:855px;top:621px;width:20px;height:363px;background:#3c3e4e"></div>
<svg style="position:absolute;left:855px;top:621px" width="21" height="363"><path d="M5.4 14 L9.5 8 L13.6 14 Z" fill="#e8e9f2"/><rect x="2.4" y="23.4" width="13.6" height="18" rx="2.5" fill="#c7c9da"/><path d="M5 30.5 H13.5 M5 32.5 H13.5 M5 34.5 H13.5" stroke="#55576a" stroke-width="1"/><path d="M5.2 350.3 L13.8 350.3 L9.5 356.5 Z" fill="#e8e9f2"/></svg>
<div id="status">
<i style="left:107px"></i>
<i style="left:326px"></i>
<i style="left:439px"></i>
<i style="left:510px"></i>
<i style="left:734px"></i>
<i style="left:930px"></i>
</div><div id="sb"></div>
<span class="s" style="font-size:15.6px;color:#3a3c4c;left:11.1px;top:1001.7px;transform:scaleX(0.941);">User: ADMIN</span>
<span class="s" style="font-size:15.6px;color:#3a3c4c;left:121.1px;top:1001.7px;transform:scaleX(0.901);">User Name: ADMINISTRATOR</span>
<span class="s" style="font-size:15.6px;color:#3a3c4c;left:340.0px;top:1001.7px;transform:scaleX(0.945);">Company: 01</span>
<span class="s" style="font-size:15.6px;color:#3a3c4c;left:455.1px;top:1001.7px;transform:scaleX(0.931);">DEMO</span>
<span class="s" style="font-size:15.6px;color:#3a3c4c;left:524.0px;top:1001.7px;transform:scaleX(0.909);">Computer: DESKTOP-2AB3IH3</span>
<span class="s" style="font-size:15.6px;color:#3a3c4c;left:748.0px;top:1001.7px;transform:scaleX(0.906);">Computer IP: 192.168.56.1</span>
<div style="left:0;top:0;width:1px;height:1030px;background:#3a3c4b"></div><div style="left:1919px;top:29px;width:1px;height:961px;background:#3d3f4e"></div>
</body></html>
